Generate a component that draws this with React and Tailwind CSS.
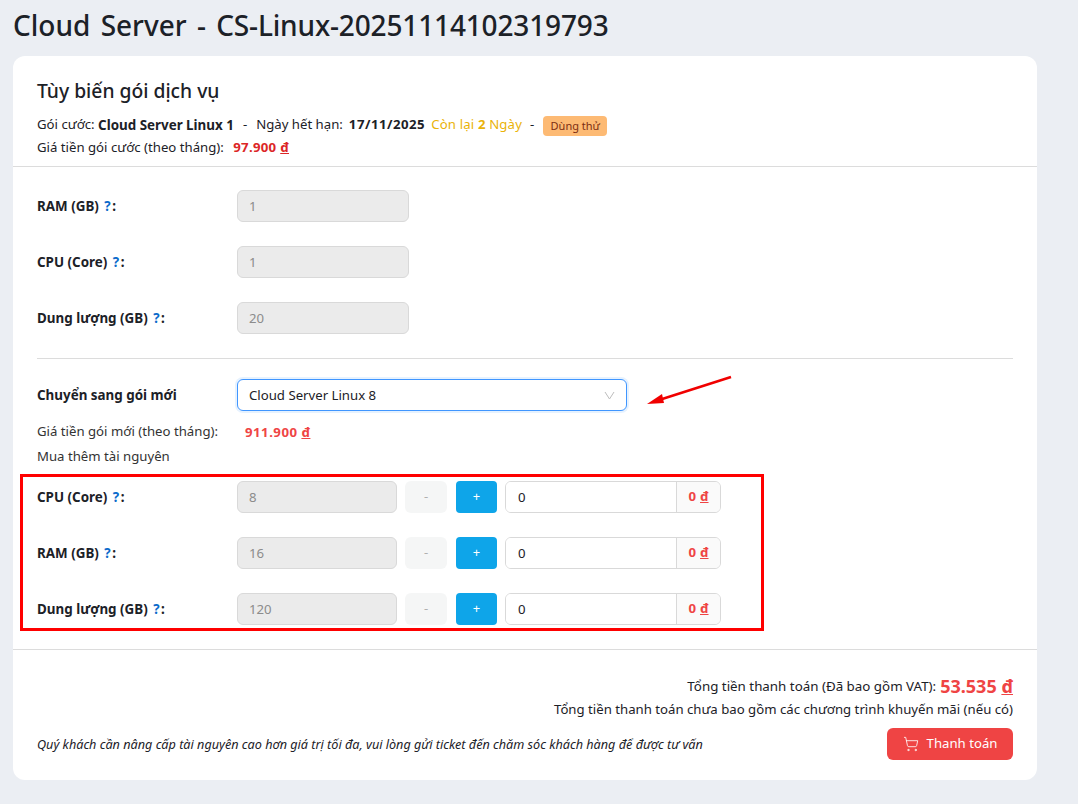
import React from 'react';
import { ShoppingCart } from 'lucide-react';

const font = "font-['Noto_Sans','Open_Sans',sans-serif]";

const baseRows = [
  { label: 'RAM (GB)', value: '1' },
  { label: 'CPU (Core)', value: '1' },
  { label: 'Dung lượng (GB)', value: '20' },
];

const extraRows = [
  { label: 'CPU (Core)', value: '8' },
  { label: 'RAM (GB)', value: '16' },
  { label: 'Dung lượng (GB)', value: '120' },
];

const Label = ({ text }) => (
  <div className="w-[200px] shrink-0 pt-[1px] font-bold text-[13.4px] text-[#1c2127]">
    {text} <span className="ml-[2px] tracking-[1.5px] text-[#0b6bcb]">?</span>:
  </div>
);

const Price = ({ children }) => (
  <>
    {children} <span className="underline">đ</span>
  </>
);

const ExtraRow = ({ label, value }) => (
  <div className="flex items-center h-8">
    <Label text={label} />
    <div className="w-[160px] h-8 flex items-center pl-[11px] pt-[2px] bg-[#ebebeb] border border-[#d9d9d9] rounded-md text-[13.2px] text-[#8c8c8c]">{value}</div>
    <div className="ml-2 w-[42px] h-8 flex items-center justify-center bg-[#f5f6f6] rounded-md text-[13px] text-[#b0b0b0]">-</div>
    <div className="ml-[9px] w-[41px] h-8 flex items-center justify-center bg-[#0ea5e9] rounded-sm text-[13px] text-white">+</div>
    <div className="ml-2 w-[216px] h-8 flex border border-[#d9d9d9] rounded-md overflow-hidden text-[13.2px]">
      <div className="flex-1 flex items-center px-3 pt-[2px] bg-white text-[#1c2127]">0</div>
      <div className="w-[44px] flex items-center justify-center gap-1 bg-[#fafafa] border-l border-[#d9d9d9] font-bold text-[#ef4444]">
        <Price>0</Price>
      </div>
    </div>
  </div>
);

export default function App() {
  return (
    <div className={`${font} relative min-h-[804px] bg-[#ebeef3] px-[13px] text-[#1c2127]`}>
      <h1 className="h-14 flex items-center text-[28px] font-medium leading-none pb-[6px] [word-spacing:3px] whitespace-pre">
        Cloud Server - <span className="tracking-[-0.15px]">CS-Linux-20251114102319793</span>
      </h1>

      <div className="w-[1024px] h-[724px] bg-white rounded-xl flex flex-col">
        <div className="h-[111px] px-6 pt-[23px] border-b border-[#dcdcdc]">
          <h2 className="text-[19.3px] font-medium leading-6">Tùy biến gói dịch vụ</h2>
          <div className="mt-[12px] flex items-center h-[20px] text-[13.2px] whitespace-pre">
            <span>Gói cước: </span><b className="text-[13.4px]">Cloud Server Linux 1</b><span className="ml-[9px]">-</span><span className="ml-[9px]">Ngày hết hạn:</span><b className="ml-[6px] tracking-[0.5px]">17/11/2025</b>
            <span className="text-[#eab308] ml-[6px] tracking-[0.15px]">Còn lại <b>2</b> Ngày</span>
            <span className="ml-2">-</span>
            <span className="ml-[9px] mt-[2px] h-[20px] w-[64px] flex items-center justify-center rounded bg-[#fdba74] text-[11px] text-[#7c2d12]">Dùng thử</span>
          </div>
          <div className="mt-[2px] text-[13.2px] leading-[20px]">
            Giá tiền gói cước (theo tháng): <b className="ml-[6px] tracking-[0.3px] text-[#dc2626]"><Price>97.900</Price></b>
          </div>
        </div>

        <div className="px-6 pt-[23px] flex flex-col gap-6">
          {baseRows.map((row) => (
            <div key={row.label} className="flex items-center h-8">
              <Label text={row.label} />
              <div className="w-[172px] h-8 flex items-center pl-[11px] pt-[2px] bg-[#ebebeb] border border-[#d9d9d9] rounded-md text-[13.2px] text-[#8c8c8c]">{row.value}</div>
            </div>
          ))}
        </div>

        <div className="mx-6 mt-6 border-t border-[#dcdcdc]" />

        <div className="px-6 mt-5 flex items-center h-8">
          <div className="w-[200px] pt-[1px] font-bold text-[13.4px]">Chuyển sang gói mới</div>
          <div className="w-[390px] h-8 flex items-center justify-between pl-[11px] pr-[11px] bg-white border border-[#4096ff] rounded-md ring-2 ring-[#e6f2ff] text-[13.2px]">
            <span className="pt-[2px]">Cloud Server Linux 8</span>
            <svg width="11" height="9" viewBox="0 0 11 9" fill="none">
              <path d="M1 1 L5.5 8 L10 1" stroke="#bdbdbd" strokeWidth="1" />
            </svg>
          </div>
        </div>

        <div className="px-6 mt-[11px] flex items-center h-5 text-[13.2px] text-[#333]">
          <div className="w-[208px]">Giá tiền gói mới (theo tháng):</div>
          <b className="pt-[2px] tracking-[0.5px] text-[#ef4444]"><Price>911.900</Price></b>
        </div>
        <div className="px-6 mt-1 h-5 text-[13.2px] leading-5 text-[#333]">Mua thêm tài nguyên</div>

        <div className="px-6 mt-[15px] flex flex-col gap-6">
          {extraRows.map((row) => <ExtraRow key={row.label} {...row} />)}
        </div>

        <div className="mt-6 border-t border-[#dcdcdc] px-6 pt-[22px] flex flex-col">
          <div className="flex items-center justify-end h-7 text-[13.35px]">
            Tổng tiền thanh toán (Đã bao gồm VAT):
            <b className="ml-1 text-[18px] text-[#ef4444]"><Price>53.535</Price></b>
          </div>
          <div className="text-right text-[13.2px] leading-5 -mt-[1px]">Tổng tiền thanh toán chưa bao gồm các chương trình khuyến mãi (nếu có)</div>
          <div className="mt-[9px] flex items-center justify-between">
            <i className="text-[12.65px]">Quý khách cần nâng cấp tài nguyên cao hơn giá trị tối đa, vui lòng gửi ticket đến chăm sóc khách hàng để được tư vấn</i>
            <div className="w-[126px] h-8 flex items-center justify-center gap-2 bg-[#ef4444] rounded-md text-[13.2px] text-white">
              <ShoppingCart className="w-4 h-4" strokeWidth={1.25} />
              Thanh toán
            </div>
          </div>
        </div>
      </div>

      {/* annotations drawn over the page */}
      <div className="absolute left-[20px] top-[474px] w-[744px] h-[157px] border-[3px] border-[#ff0000] pointer-events-none" />
      <svg className="absolute left-[645px] top-[374px]" width="90" height="34" viewBox="0 0 90 34">
        <path d="M86 3 L14 26" stroke="#f00000" strokeWidth="2.5" fill="none" />
        <path d="M2 30 L17 20 L19 29 Z" fill="#f00000" />
      </svg>
    </div>
  );
}
